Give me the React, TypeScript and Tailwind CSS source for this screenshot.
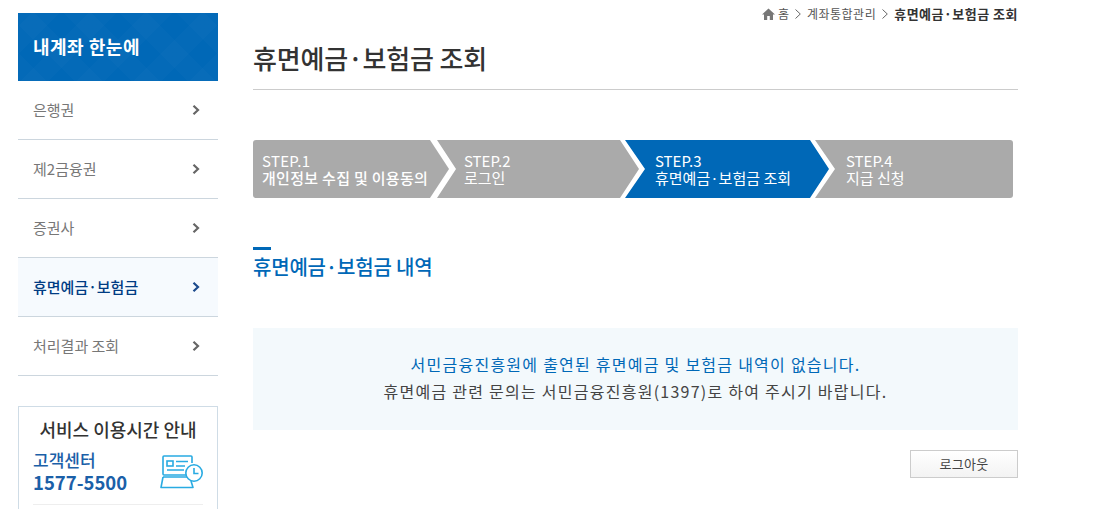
const FONT = 'font-["Noto_Sans_CJK_KR","Noto_Sans",sans-serif]';

const menu = [
  { label: '은행권' },
  { label: '제2금융권' },
  { label: '증권사' },
  { label: '휴면예금·보험금', active: true },
  { label: '처리결과 조회' },
];

function MenuArrow({ className }: { className: string }) {
  return (
    <svg width="8" height="10" viewBox="0 0 8 10" fill="none" stroke="currentColor" strokeWidth="2.2" className={className}>
      <path d="M1.5 0.8L6 5L1.5 9.2" />
    </svg>
  );
}

function CrumbArrow() {
  return (
    <svg width="6" height="10" viewBox="0 0 6 10" fill="none" stroke="#666666" strokeWidth="1">
      <path d="M0.5 0.5L5.3 5L0.5 9.5" />
    </svg>
  );
}

function HoursIcon() {
  return (
    <svg width="44" height="38" viewBox="0 0 44 38" fill="none" stroke="#29abe2" strokeWidth="1.6" className="shrink-0 mt-[2px] -mr-[1px]">
      <path d="M28 21H4a1 1 0 0 1-1-1V3a1 1 0 0 1 1-1h27a1 1 0 0 1 1 1v6" />
      <rect x="7" y="7" width="6" height="5" />
      <path d="M16 7.5h12M16 12h9M7 16h17" />
      <path d="M3 23h25M3 23L1 33.5h32L31 27" strokeLinejoin="round" />
      <circle cx="34" cy="19" r="8.2" fill="#fff" />
      <path d="M34 14v5.5h4.5" />
    </svg>
  );
}

function Sidebar() {
  return (
    <aside className="w-[200px] shrink-0 pt-[13px]">
      <div className="h-[68px] flex items-center pl-[15px] pb-[2px] text-[18px] tracking-[0.5px] font-bold text-white bg-[#0068b7] bg-[repeating-linear-gradient(45deg,rgba(255,255,255,0.015)_0_20px,transparent_20px_40px),repeating-linear-gradient(-45deg,rgba(255,255,255,0.015)_0_20px,transparent_20px_40px)]">
        내계좌 한눈에
      </div>
      <ul>
        {menu.map((m) => (
          <li
            key={m.label}
            className={`h-[59px] flex items-center justify-between pl-[15px] pr-[18px] border-b border-[#ccd6de] text-[15px] ${
              m.active ? 'bg-[#f6fafe] text-[#003c83] font-medium' : 'text-[#777777]'
            }`}
          >
            <span>{m.label}</span>
            <MenuArrow className={m.active ? 'text-[#1c4a8c]' : 'text-[#666666]'} />
          </li>
        ))}
      </ul>
      <div className="mt-[30px] h-[120px] border border-[#cfdce6] px-[14px]">
        <h3 className="mt-[9px] text-center text-[18px] font-medium leading-[26px] text-[#333333]">서비스 이용시간 안내</h3>
        <div className="mt-[7px] flex items-center justify-between border-b border-[#eeeeee] pb-[10px]">
          <div className="text-[#1b60a8] font-medium">
            <p className="text-[17px] leading-[21px]">고객센터</p>
            <p className="text-[18.5px] leading-[24px] font-bold">1577-5500</p>
          </div>
          <HoursIcon />
        </div>
      </div>
    </aside>
  );
}

const steps = [
  { no: 'STEP.1', text: '개인정보 수집 및 이용동의', cls: 'w-[196px] -mr-[12px] pl-[9px] rounded-l-[3px] bg-[#aaaaaa] font-medium tracking-[0.3px] [clip-path:polygon(0_0,177px_0,100%_50%,177px_100%,0_100%)]' },
  { no: 'STEP.2', text: '로그인', cls: 'w-[202px] -mr-[14px] pl-[27px] bg-[#aaaaaa] [clip-path:polygon(0_0,183px_0,100%_50%,183px_100%,0_100%,19px_50%)]' },
  { no: 'STEP.3', text: '휴면예금·보험금 조회', cls: 'w-[204px] -mr-[14px] pl-[30px] bg-[#0068b7] [clip-path:polygon(0_0,185px_0,100%_50%,185px_100%,0_100%,20px_50%)]' },
  { no: 'STEP.4', text: '지급 신청', cls: 'w-[198px] pl-[31px] rounded-r-[3px] bg-[#aaaaaa] [clip-path:polygon(0_0,100%_0,100%_100%,0_100%,20px_50%)]' },
];

function Main() {
  return (
    <main className="w-[765px] ml-[35px] shrink-0">
      <nav className="h-[27px] flex items-center justify-end gap-[6px] text-[12px] text-[#555555]">
        <svg width="13" height="12" viewBox="0 0 13 12" fill="#777777" className="-mr-[3px]">
          <path d="M6.5 0.5L0 6.5h2V12h3.2V8h2.6v4H11V6.5h2z" />
        </svg>
        <span>홈</span>
        <CrumbArrow />
        <span className="tracking-[0.5px]">계좌통합관리</span>
        <CrumbArrow />
        <strong className="font-bold text-[13px] text-[#333333] tracking-[0.5px]">휴면예금·보험금 조회</strong>
      </nav>
      <h1 className="h-[63px] pt-[11px] border-b border-[#cccccc] text-[26px] tracking-[-0.2px] leading-[40px] font-medium text-[#333333]">
        휴면예금·보험금 조회
      </h1>
      <ol className="mt-[50px] flex h-[58px]">
        {steps.map((s) => (
          <li key={s.no} className={`h-full shrink-0 pt-[12px] text-[15px] leading-[17px] text-white ${s.cls}`}>
            <p className="font-normal">{s.no}</p>
            <p>{s.text}</p>
          </li>
        ))}
      </ol>
      <div className="mt-[49px] w-[18px] h-[3px] bg-[#0068b7]" />
      <h2 className="mt-[2px] text-[20px] tracking-[-0.2px] leading-[30px] font-medium text-[#0068b7]">휴면예금·보험금 내역</h2>
      <div className="mt-[46px] h-[102px] pb-[2px] bg-[#f3f9fc] flex flex-col items-center justify-center text-[16px] leading-[27px] tracking-[1.25px]">
        <p className="text-[#0068b7]">서민금융진흥원에 출연된 휴면예금 및 보험금 내역이 없습니다.</p>
        <p className="text-[#444444]">휴면예금 관련 문의는 서민금융진흥원(1397)로 하여 주시기 바랍니다.</p>
      </div>
      <div className="mt-[20px] flex justify-end">
        <button className="w-[108px] h-[28px] border border-[#cccccc] bg-gradient-to-b from-white to-[#f3f3f3] text-[13px] tracking-[0.3px] text-[#444444]">
          로그아웃
        </button>
      </div>
    </main>
  );
}

export default function App() {
  return (
    <div className={`h-[509px] overflow-hidden bg-white pl-[18px] flex ${FONT}`}>
      <Sidebar />
      <Main />
    </div>
  );
}
